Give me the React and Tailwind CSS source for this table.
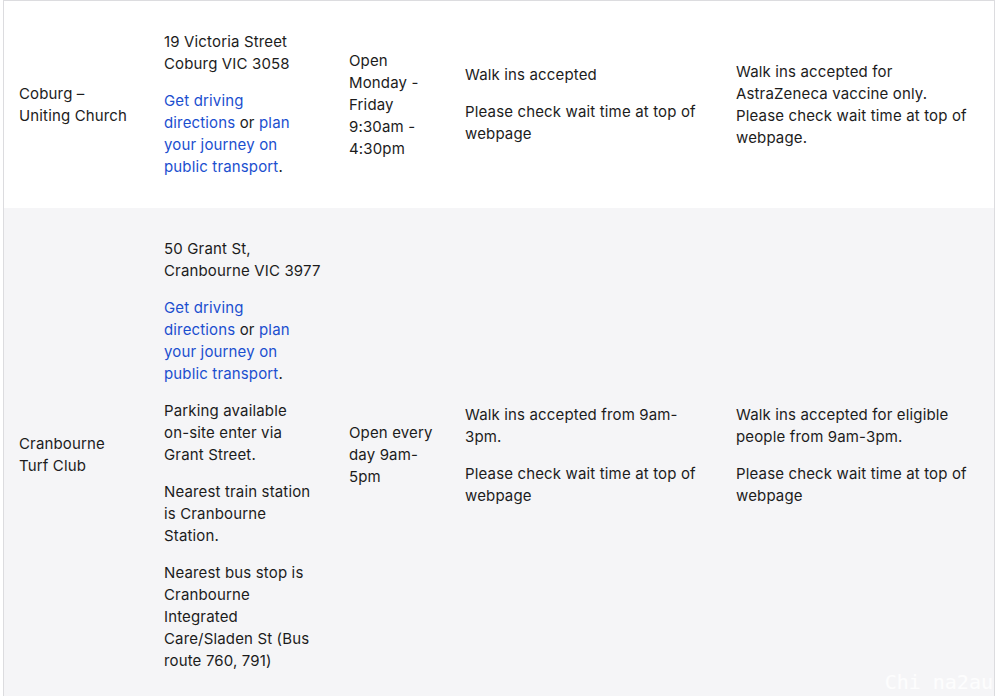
import React from "react";

const Link = ({ children }) => <span className="text-[#1b4fcf]">{children}</span>;

function Row({ bg, cells }) {
  return (
    <div className={`grid grid-cols-[145px_185px_116px_271px_1fr] items-center ${bg}`}>
      {cells.map((c, i) => (
        <div key={i} className="pl-[15px] pr-2 pt-[30px] pb-[30px]">
          {c}
        </div>
      ))}
    </div>
  );
}

export default function App() {
  const P = ({ children, first }) => (
    <p className={first ? "" : "mt-[15px]"}>{children}</p>
  );
  return (
    <div
      className="relative w-[999px] h-[696px] overflow-hidden bg-white text-[15px] leading-[22px] tracking-[0.15px] text-[#1c1c1c]"
      style={{ fontFamily: "Inter, 'Open Sans', sans-serif" }}
    >
      <div className="ml-[3px] w-[992px] border-l border-r border-t border-[#dcdcdf]">
        <Row
          bg="bg-white"
          cells={[
            <p>
              Coburg –<br />Uniting Church
            </p>,
            <div>
              <P first>
                19 Victoria Street
                <br />
                Coburg VIC 3058
              </P>
              <P>
                <Link>Get driving</Link>
                <br />
                <Link>directions</Link> or <Link>plan</Link>
                <br />
                <Link>your journey on</Link>
                <br />
                <Link>public transport</Link>.
              </P>
            </div>,
            <p>
              Open
              <br />
              Monday -<br />
              Friday
              <br />
              9:30am -<br />
              4:30pm
            </p>,
            <div>
              <P first>Walk ins accepted</P>
              <P>
                Please check wait time at top of
                <br />
                webpage
              </P>
            </div>,
            <p>
              Walk ins accepted for
              <br />
              AstraZeneca vaccine only.
              <br />
              Please check wait time at top of
              <br />
              webpage.
            </p>,
          ]}
        />
        <Row
          bg="bg-[#f5f5f7]"
          cells={[
            <p>
              Cranbourne
              <br />
              Turf Club
            </p>,
            <div>
              <P first>
                50 Grant St,
                <br />
                Cranbourne VIC 3977
              </P>
              <P>
                <Link>Get driving</Link>
                <br />
                <Link>directions</Link> or <Link>plan</Link>
                <br />
                <Link>your journey on</Link>
                <br />
                <Link>public transport</Link>.
              </P>
              <P>
                Parking available
                <br />
                on-site enter via
                <br />
                Grant Street.
              </P>
              <P>
                Nearest train station
                <br />
                is Cranbourne
                <br />
                Station.
              </P>
              <P>
                Nearest bus stop is
                <br />
                Cranbourne
                <br />
                Integrated
                <br />
                Care/Sladen St (Bus
                <br />
                route 760, 791)
              </P>
            </div>,
            <p>
              Open every
              <br />
              day 9am-
              <br />
              5pm
            </p>,
            <div>
              <P first>
                Walk ins accepted from 9am-
                <br />
                3pm.
              </P>
              <P>
                Please check wait time at top of
                <br />
                webpage
              </P>
            </div>,
            <div>
              <P first>
                Walk ins accepted for eligible
                <br />
                people from 9am-3pm.
              </P>
              <P>
                Please check wait time at top of
                <br />
                webpage
              </P>
            </div>,
          ]}
        />
      </div>
      <div
        className="absolute right-[6px] bottom-[2px] text-[20px] leading-[24px] tracking-normal text-white/80"
        style={{ fontFamily: "'DejaVu Sans Mono', monospace" }}
      >
        Chi na2au
      </div>
    </div>
  );
}
